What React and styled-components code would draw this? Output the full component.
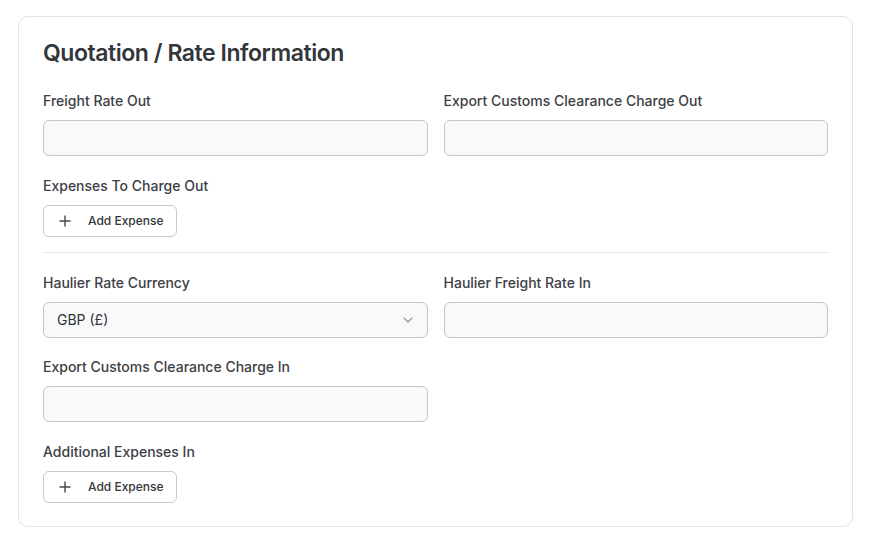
import React from "react";
import styled, { createGlobalStyle } from "styled-components";

const Global = createGlobalStyle`
  html, body { margin: 0; padding: 0; background: #ffffff; }
  body { font-family: Inter, "Noto Sans", sans-serif; color: #2f3337; }
  * { box-sizing: border-box; }
`;

const Page = styled.div`
  padding: 16px 16px 8px 18px;
`;

const Card = styled.section`
  border: 1px solid #e1e2e6;
  border-radius: 10px;
  padding: 22px 24px 23px;
  background: #fff;
`;

const Title = styled.h2`
  margin: 0 0 24px;
  font-size: 23px;
  line-height: 28px;
  font-weight: 600;
  letter-spacing: -0.45px;
  color: #33363a;
`;

const Grid = styled.div`
  display: grid;
  grid-template-columns: 1fr 1fr;
  column-gap: 16px;
  row-gap: 19.5px;
`;

const Field = styled.div`
  display: flex;
  flex-direction: column;
  gap: 9px;
  grid-column: ${(p) => (p.$full ? "1 / -1" : "auto")};
`;

const Label = styled.label`
  font-size: 14px;
  line-height: 20px;
  font-weight: 500;
  color: #3d4045;
`;

const Input = styled.input`
  height: 36px;
  width: 100%;
  border: 1px solid #c4c6cf;
  border-radius: 6px;
  background: #f9f9fa;
  padding: 0 13px;
  font: inherit;
  font-size: 14px;
  outline: none;
`;

const SelectBox = styled.div`
  height: 36px;
  border: 1px solid #c4c6cf;
  border-radius: 6px;
  background: #f9f9fa;
  padding: 0 14px 0 13px;
  display: flex;
  align-items: center;
  justify-content: space-between;
  font-size: 14px;
  color: #2f3337;
`;

const AddButton = styled.button`
  align-self: flex-start;
  height: 32px;
  width: 134px;
  display: flex;
  align-items: center;
  gap: 17px;
  padding: 0 0 0 15px;
  border: 1px solid #c8c9cf;
  border-radius: 6px;
  background: #fff;
  font-family: inherit;
  font-size: 12px;
  font-weight: 500;
  color: #33363a;
  cursor: pointer;
`;

const Divider = styled.hr`
  border: none;
  border-top: 1px solid #e6e7ea;
  margin: 15.5px 0 19.5px;
`;

const Plus = () => (
  <svg width="12" height="12" viewBox="0 0 12 12" fill="none">
    <path d="M6 1v10M1 6h10" stroke="#44474c" strokeWidth="1.4" strokeLinecap="round" />
  </svg>
);

const Chevron = () => (
  <svg width="10" height="6" viewBox="0 0 10 6" fill="none">
    <path d="M1 1l4 4 4-4" stroke="#8a8d93" strokeWidth="1.1" strokeLinecap="round" strokeLinejoin="round" />
  </svg>
);

export default function App() {
  return (
    <>
      <Global />
      <Page>
        <Card>
          <Title>Quotation / Rate Information</Title>
          <Grid>
            <Field>
              <Label>Freight Rate Out</Label>
              <Input />
            </Field>
            <Field>
              <Label>Export Customs Clearance Charge Out</Label>
              <Input />
            </Field>
            <Field $full>
              <Label>Expenses To Charge Out</Label>
              <AddButton><Plus />Add Expense</AddButton>
            </Field>
          </Grid>
          <Divider />
          <Grid>
            <Field>
              <Label>Haulier Rate Currency</Label>
              <SelectBox>
                <span>GBP (£)</span>
                <Chevron />
              </SelectBox>
            </Field>
            <Field>
              <Label>Haulier Freight Rate In</Label>
              <Input />
            </Field>
            <Field>
              <Label>Export Customs Clearance Charge In</Label>
              <Input />
            </Field>
            <Field $full>
              <Label>Additional Expenses In</Label>
              <AddButton><Plus />Add Expense</AddButton>
            </Field>
          </Grid>
        </Card>
      </Page>
    </>
  );
}
